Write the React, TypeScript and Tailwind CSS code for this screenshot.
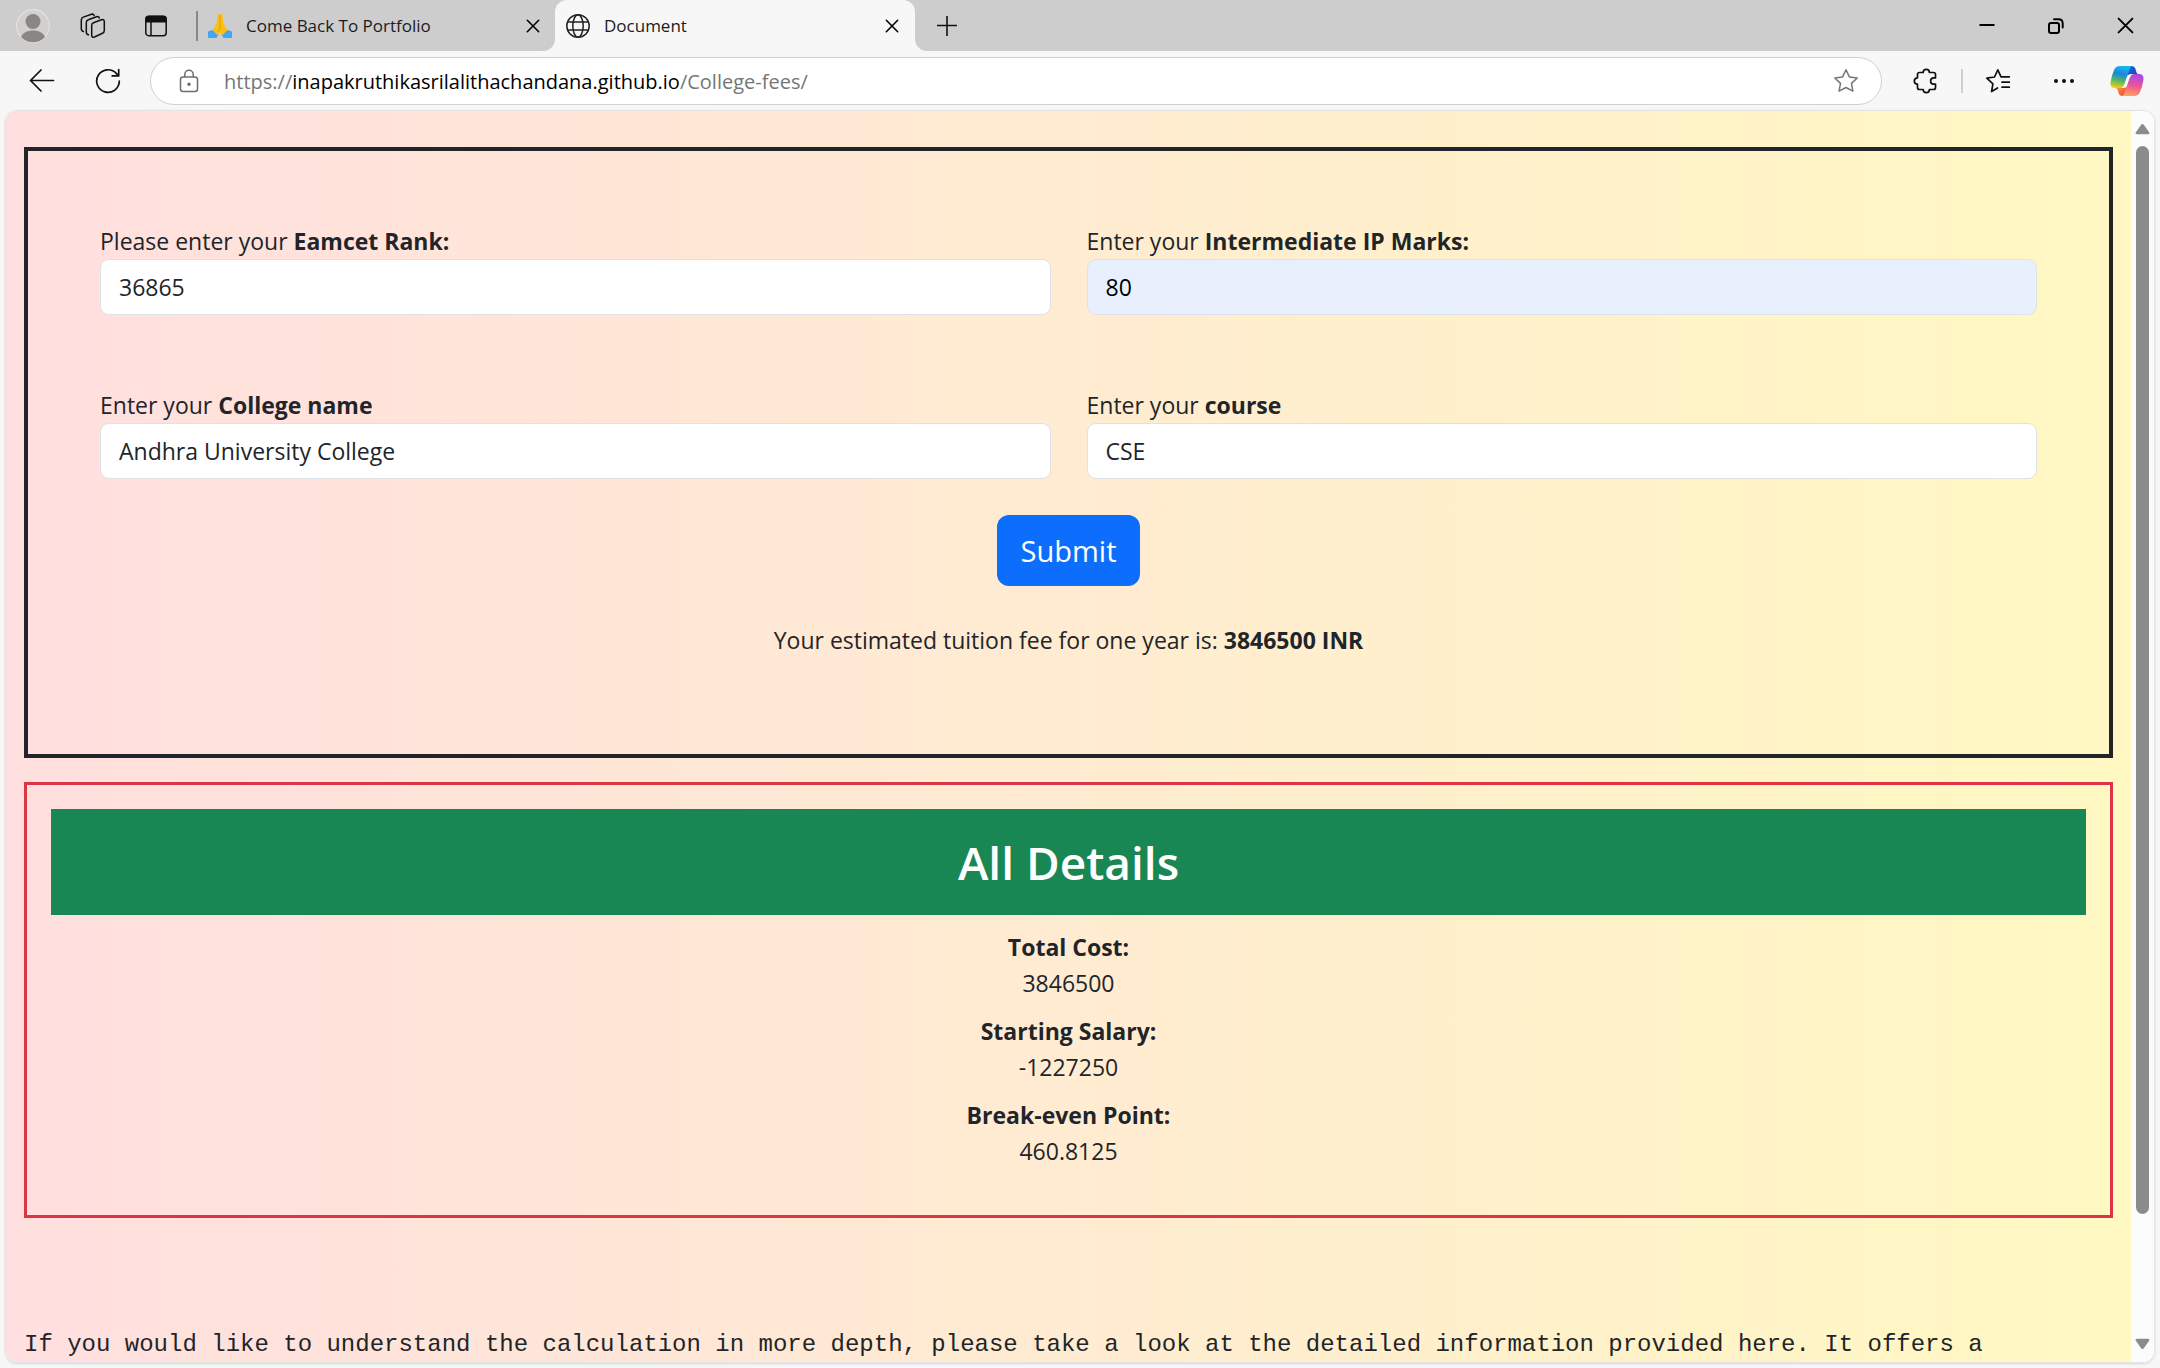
import React, { useState } from "react";

function Avatar() {
  return (
    <svg width="34" height="34" viewBox="0 0 34 34" aria-hidden="true">
      <circle cx="17" cy="17" r="16.3" fill="#d2d0ce" stroke="#e4e2e0" strokeWidth="1.2" />
      <circle cx="17" cy="12.5" r="7.5" fill="#8a8684" />
      <path d="M5 28 C7 23.500 11.500 21.500 17 21.500 C22.500 21.500 27 23.500 29 28 C26 31.500 21.500 33.300 17 33.300 C12.500 33.300 8 31.500 5 28 Z" fill="#8a8684" />
    </svg>
  );
}

function WorkspacesIcon() {
  return (
    <svg width="26" height="26" viewBox="0 0 26 26" fill="none" stroke="#111" strokeWidth="1.5" strokeLinejoin="round" strokeLinecap="round" aria-hidden="true">
      <path d="M13.500 9.800 L21.500 6.800 Q24.300 6 24.300 8.800 L24.300 17.500 Q24.300 19.500 22.500 20.300 L14.500 24 Q11.700 25 11.700 22.300 L11.700 12.500 Q11.700 10.500 13.500 9.800 Z" />
      <path d="M8.500 21.800 Q6.300 21.500 6.300 19 L6.300 9.700 Q6.300 7.500 8.300 6.800 L16.500 3.700 Q18.800 3.200 19.300 5" />
      <path d="M3.500 18.600 Q1.300 18 1.300 15.500 L1.300 7 Q1.300 4.800 3.300 4.100 L11.500 1.200 Q13.600 0.800 14.200 2.500" />
    </svg>
  );
}

function TabLayoutIcon() {
  return (
    <svg width="24" height="24" viewBox="0 0 24 24" fill="none" aria-hidden="true">
      <rect x="1.800" y="2.300" width="20.400" height="19.400" rx="3" stroke="#111" strokeWidth="1.500" />
      <path d="M1.500 8.500 V5 Q1.500 1.700 5 1.700 H19 Q22.500 1.700 22.500 5 V8.500 Z" fill="#111" />
      <path d="M7 8 V21.500" stroke="#111" strokeWidth="1.500" />
    </svg>
  );
}

function FoldedHands() {
  return (
    <svg width="24" height="24" viewBox="0 0 24 24" aria-hidden="true">
      <path d="M0 17.500 L5.500 15.500 L10.500 20.500 L8.500 24 H0 Z" fill="#42a5f5" />
      <path d="M24 17.500 L18.500 15.500 L13.500 20.500 L15.500 24 H24 Z" fill="#42a5f5" />
      <path d="M9.600 1 Q10.500 -0.400 12 0.300 Q13.500 -0.400 14.400 1 L15.200 9.500 L19.500 16.200 L14.800 21 L12 18.500 L9.200 21 L4.500 16.200 L8.800 9.500 Z" fill="#fdbf12" />
      <path d="M12 1 V14.500 L9.800 18" fill="none" stroke="#e59600" strokeWidth="0.900" />
    </svg>
  );
}

function GlobeIcon() {
  return (
    <svg width="24" height="24" viewBox="0 0 24 24" fill="none" stroke="#222" strokeWidth="1.500" aria-hidden="true">
      <circle cx="12" cy="12" r="11.200" />
      <ellipse cx="12" cy="12" rx="5.200" ry="11.200" />
      <path d="M1.800 8 H22.200 M1.800 16 H22.200" />
    </svg>
  );
}

function Cross({ size }: { size: number }) {
  return (
    <svg width={size} height={size} viewBox="0 0 16 16" fill="none" stroke="#000" strokeWidth="1.800" strokeLinecap="round" aria-hidden="true">
      <path d="M1.500 1.500 L14.500 14.500 M14.500 1.500 L1.500 14.500" />
    </svg>
  );
}

function StarIcon() {
  return (
    <svg width="26" height="26" viewBox="0 0 26 26" fill="none" stroke="#767676" strokeWidth="1.500" strokeLinejoin="round" aria-hidden="true">
      <path d="M13 1.800 L16.400 8.900 L24.200 10 L18.500 15.400 L19.900 23.200 L13 19.500 L6.100 23.200 L7.500 15.400 L1.800 10 L9.600 8.900 Z" />
    </svg>
  );
}

function FavoritesIcon() {
  return (
    <svg width="26" height="26" viewBox="0 0 26 26" fill="none" stroke="#111" strokeWidth="1.700" strokeLinejoin="round" strokeLinecap="round" aria-hidden="true">
      <path d="M12.500 20 L6.600 23.500 L7.900 15.800 L1.800 10.200 L9.500 9 L12.800 1.800 L16 8.800 H24.300 M17 14.200 H24.300 M17 19.200 H24.300" />
    </svg>
  );
}

function PuzzleIcon() {
  return (
    <svg width="26" height="26" viewBox="0 0 26 26" fill="none" stroke="#111" strokeWidth="1.700" strokeLinejoin="round" aria-hidden="true">
      <path d="M6.500 4.500 H10.200 Q10.200 1.300 13.300 1.300 Q16.400 1.300 16.400 4.500 H20.500 Q22.500 4.500 22.500 6.500 V9.800 H20.500 Q17.600 10 17.600 13 Q17.600 16 20.500 16.200 H22.500 V19.500 Q22.500 21.500 20.500 21.500 H16.400 Q16.400 24.600 13.300 24.600 Q10.200 24.600 10.200 21.500 H6.500 Q4.500 21.500 4.500 19.500 V16.200 Q1.300 16 1.300 13 Q1.300 10 4.500 9.800 V6.500 Q4.500 4.500 6.500 4.500 Z" />
    </svg>
  );
}

function CopilotIcon() {
  return (
    <svg width="34" height="32" viewBox="0 0 34 32" aria-hidden="true">
      <defs>
        <linearGradient id="cpA" x1="0.500" y1="0" x2="0.300" y2="1">
          <stop offset="0" stopColor="#1ab6f0" />
          <stop offset="0.350" stopColor="#1b86dc" />
          <stop offset="0.650" stopColor="#4fb56a" />
          <stop offset="1" stopColor="#f5d010" />
        </linearGradient>
        <linearGradient id="cpB" x1="0.600" y1="0" x2="0.400" y2="1">
          <stop offset="0" stopColor="#a348ec" />
          <stop offset="0.500" stopColor="#ee5397" />
          <stop offset="1" stopColor="#ffa45e" />
        </linearGradient>
        <linearGradient id="cpC" x1="0" y1="0" x2="1" y2="1">
          <stop offset="0" stopColor="#1668d6" />
          <stop offset="1" stopColor="#1b3fbd" />
        </linearGradient>
        <linearGradient id="cpD" x1="0" y1="0" x2="1" y2="1">
          <stop offset="0" stopColor="#ffb32c" />
          <stop offset="1" stopColor="#e8394a" />
        </linearGradient>
      </defs>
      <path d="M17 1 H21.500 Q24.500 1 25.500 4 L26.500 7.500 Q27 9 29 9 H22 Q19 9 17.500 12 Z" fill="url(#cpC)" />
      <path d="M17 31 H12.500 Q9.500 31 8.500 28 L7.500 24.500 Q7 23 5 23 H12 Q15 23 16.500 20 Z" fill="url(#cpD)" />
      <path d="M10 1 H23 Q20.500 1 19.500 4.500 L14.500 19 Q13 23 10 23 H5 Q0 23 0.500 17.500 Q1.500 10 4.500 4 Q6 1 10 1 Z" fill="url(#cpA)" />
      <path d="M24 31 H11 Q13.500 31 14.500 27.500 L19.500 13 Q21 9 24 9 H29 Q34 9 33.500 14.500 Q32.500 22 29.500 28 Q28 31 24 31 Z" fill="url(#cpB)" />
      <path d="M19.500 9.500 H22 Q20.500 10.500 19.500 13 L16.500 21.500 Q15.800 22.800 14.500 22.800 H12 Q13.700 21.500 14.500 19 L17.500 10.700 Q18 9.500 19.500 9.500 Z" fill="#f7f7f7" />
    </svg>
  );
}

function TabStrip() {
  return (
    <header className="flex h-[51px] shrink-0 items-center bg-[#cdcdcd] text-[17px] text-[#1b1b1b]">
      <div className="flex w-[205px] shrink-0 items-center pl-4">
        <button aria-label="Profile"><Avatar /></button>
        <button aria-label="Workspaces" className="ml-[30px]"><WorkspacesIcon /></button>
        <button aria-label="Tab actions" className="ml-[38px]"><TabLayoutIcon /></button>
        <span className="ml-7 h-[30px] w-0.5 bg-[#888]" />
      </div>
      <div className="flex h-full w-[350px] shrink-0 bg-[#f7f7f7]">
        <div className="flex w-full items-center rounded-br-xl bg-[#cdcdcd] pr-[14px] pl-[3px]">
          <FoldedHands />
          <span className="ml-[14px] grow">Come Back To Portfolio</span>
          <button aria-label="Close tab" className="grid size-4 place-items-center"><Cross size={14} /></button>
        </div>
      </div>
      <div className="flex h-full w-[360px] shrink-0 bg-[#cdcdcd]">
        <div className="flex w-full items-center rounded-t-xl bg-[#f7f7f7] pr-[15px] pl-[11px]">
          <GlobeIcon />
          <span className="ml-[14px] grow">Document</span>
          <button aria-label="Close tab" className="grid size-4 place-items-center"><Cross size={14} /></button>
        </div>
      </div>
      <div className="flex h-full grow bg-[#f7f7f7]">
        <div className="flex grow items-center justify-between rounded-bl-xl bg-[#cdcdcd] pr-[26px] pl-[22px]">
          <button aria-label="New tab">
            <svg width="20" height="20" viewBox="0 0 20 20" stroke="#111" strokeWidth="1.600" aria-hidden="true">
              <path d="M0 9.500 H20 M10 0 V20" />
            </svg>
          </button>
          <div className="flex items-center gap-[53px]">
            <button aria-label="Minimize">
              <svg width="16" height="16" viewBox="0 0 16 16" stroke="#000" strokeWidth="2" aria-hidden="true"><path d="M0.500 7 H15.500" /></svg>
            </button>
            <button aria-label="Restore">
              <svg width="16" height="16" viewBox="0 0 16 16" fill="none" stroke="#000" strokeWidth="2" strokeLinecap="round" aria-hidden="true">
                <rect x="1" y="5" width="10" height="10" rx="2" />
                <path d="M6 1.300 H10.500 Q14.700 1.300 14.700 5.500 V9.500" />
              </svg>
            </button>
            <button aria-label="Close window"><Cross size={17} /></button>
          </div>
        </div>
      </div>
    </header>
  );
}

function Toolbar() {
  return (
    <nav className="flex h-[59px] shrink-0 items-center pr-4 pl-[29px]">
      <button aria-label="Back">
        <svg width="26" height="24" viewBox="0 0 26 24" fill="none" stroke="#111" strokeWidth="1.700" strokeLinecap="round" strokeLinejoin="round" aria-hidden="true">
          <path d="M24.500 11.500 H1.500 M12 1 L1.500 11.500 L12 22" />
        </svg>
      </button>
      <button aria-label="Refresh" className="ml-10">
        <svg width="26" height="26" viewBox="0 0 26 26" fill="none" stroke="#111" strokeWidth="1.700" strokeLinecap="round" strokeLinejoin="round" aria-hidden="true">
          <path d="M24.300 13 A11.300 11.300 0 1 1 21.500 5.600 L23.500 7.800 M23.700 1.500 V7.900 H17.200" />
        </svg>
      </button>
      <div className="ml-[29px] flex h-12 grow items-center rounded-full border border-[#d1d1d1] bg-white pr-[22px] pl-[28px]">
        <svg width="20" height="24" viewBox="0 0 20 24" fill="none" stroke="#6e6e6e" strokeWidth="1.500" aria-hidden="true">
          <rect x="1.500" y="8" width="17" height="14.500" rx="2.500" />
          <path d="M5.800 8 V5.500 A4.200 4.200 0 0 1 14.200 5.500 V8" />
          <circle cx="10" cy="15.300" r="1" fill="#6e6e6e" />
        </svg>
        <a href="https://inapakruthikasrilalithachandana.github.io/College-fees/" className="ml-[25px] grow pt-0.5 text-[20px] text-[#767676]">
          https://<span className="text-black">inapakruthikasrilalithachandana.github.io</span>/College-fees/
        </a>
        <button aria-label="Add to favorites"><StarIcon /></button>
      </div>
      <div className="ml-[31px] flex shrink-0 items-center">
        <button aria-label="Extensions"><PuzzleIcon /></button>
        <span className="ml-[22px] h-6 w-0.5 bg-[#d0d0d0]" />
        <button aria-label="Favorites" className="ml-[22px]"><FavoritesIcon /></button>
        <button aria-label="Settings and more" className="ml-[42px]">
          <svg width="22" height="6" viewBox="0 0 22 6" fill="#111" aria-hidden="true">
            <circle cx="3" cy="3" r="2" /><circle cx="11" cy="3" r="2" /><circle cx="19" cy="3" r="2" />
          </svg>
        </button>
        <button aria-label="Copilot" className="ml-[35px]"><CopilotIcon /></button>
      </div>
    </nav>
  );
}

type FieldProps = { id: string; lead: string; strong: string; initial: string; filled?: boolean };

function Field({ id, lead, strong, initial, filled }: FieldProps) {
  const [value, setValue] = useState(initial);
  return (
    <div className="flex flex-col">
      <label htmlFor={id} className="leading-9">
        {lead} <strong>{strong}</strong>
      </label>
      <input
        id={id}
        value={value}
        onChange={(e) => setValue(e.target.value)}
        className={
          filled
            ? "h-14 rounded-[9px] border border-[#dee2e6] bg-[#e8f0fe] px-[18px] text-black"
            : "h-14 rounded-[9px] border border-[#dee2e6] bg-white px-[18px]"
        }
      />
    </div>
  );
}

function Detail({ title, value }: { title: string; value: string }) {
  return (
    <div className="mb-3 leading-9">
      <dt className="font-bold">{title}</dt>
      <dd>{value}</dd>
    </div>
  );
}

function Scrollbar() {
  return (
    <div className="flex w-[23px] shrink-0 flex-col items-center bg-[#fcfcfc] py-3" aria-hidden="true">
      <svg width="15" height="12" viewBox="0 0 15 12"><path d="M7.500 1 Q8.300 1 9 2 L14.300 9.500 Q15 11.300 13.300 11.300 H1.700 Q0 11.300 0.700 9.500 L6 2 Q6.700 1 7.500 1 Z" fill="#8b8b8b" /></svg>
      <div className="mt-[11px] w-[13px] grow-[1069] rounded-full bg-[#8b8b8b]" />
      <div className="grow-[124]" />
      <svg width="15" height="12" viewBox="0 0 15 12"><path d="M7.500 11 Q8.300 11 9 10 L14.300 2.500 Q15 0.700 13.300 0.700 H1.700 Q0 0.700 0.700 2.500 L6 10 Q6.700 11 7.500 11 Z" fill="#8b8b8b" /></svg>
    </div>
  );
}

export default function App() {
  return (
    <div className="flex h-screen flex-col overflow-hidden bg-[#f7f7f7] font-['Open_Sans','Noto_Sans',sans-serif]">
      <TabStrip />
      <Toolbar />
      <div className="mx-[5px] mb-[5px] flex min-h-0 grow overflow-hidden rounded-xl border border-[#e0e4e6] shadow-sm">
        <main className="min-w-0 grow overflow-hidden bg-linear-to-r from-[#ffdfdf] to-[#fff8c2] px-[18px] pt-9 text-[23px] text-[#212529]">
          <form className="border-4 border-[#212529] px-[72px] pt-[72px] pb-24" onSubmit={(e) => e.preventDefault()}>
            <div className="grid grid-cols-2 gap-x-9 gap-y-[72px]">
              <Field id="rank" lead="Please enter your" strong="Eamcet Rank:" initial="36865" />
              <Field id="marks" lead="Enter your" strong="Intermediate IP Marks:" initial="80" filled />
              <Field id="college" lead="Enter your" strong="College name" initial="Andhra University College" />
              <Field id="course" lead="Enter your" strong="course" initial="CSE" />
            </div>
            <div className="mt-9 text-center">
              <button type="submit" className="h-[71px] rounded-xl bg-[#0d6efd] px-6 text-[29px] text-white">Submit</button>
            </div>
            <p className="mt-9 text-center leading-9">
              Your estimated tuition fee for one year is: <strong>3846500 INR</strong>
            </p>
          </form>
          <section className="mt-6 border-3 border-[#dc3545] px-6 pt-6 pb-[34px] text-center">
            <h1 className="bg-[#198754] py-6 text-[46px] leading-[58px] font-semibold text-white">All Details</h1>
            <dl className="mt-[14px]">
              <Detail title="Total Cost:" value="3846500" />
              <Detail title="Starting Salary:" value="-1227250" />
              <Detail title="Break-even Point:" value="460.8125" />
            </dl>
          </section>
          <p className="mt-[109px] font-['Liberation_Mono',monospace] text-[24px] leading-9 whitespace-nowrap">
            If you would like to understand the calculation in more depth, please take a look at the detailed information provided here. It offers a
          </p>
        </main>
        <Scrollbar />
      </div>
    </div>
  );
}
